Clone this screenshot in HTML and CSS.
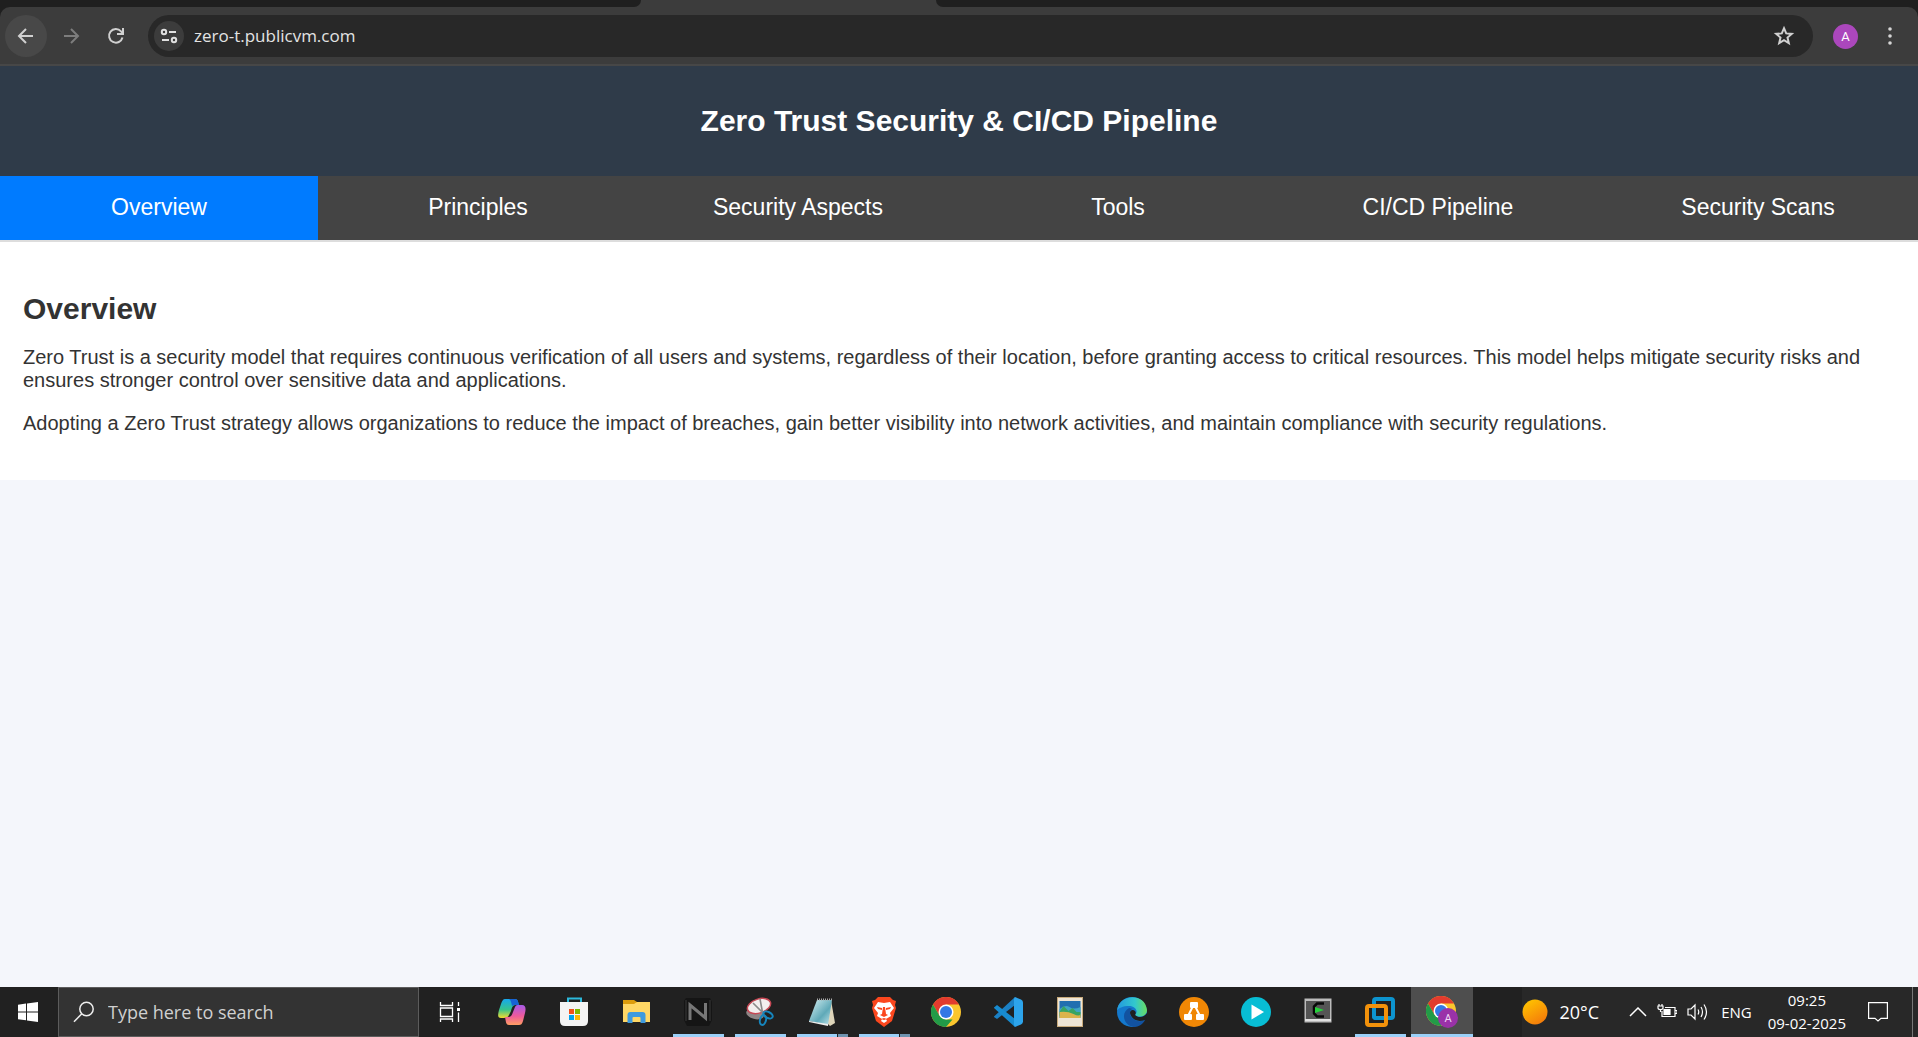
FILE: index.html
```html
<!DOCTYPE html>
<html lang="en">
<head>
<meta charset="utf-8">
<meta name="viewport" content="width=device-width, initial-scale=1">
<title>Zero Trust Security &amp; CI/CD Pipeline</title>
<link rel="stylesheet" href="styles.css">
</head>
<body>
<div class="browser">
  <div class="tabstrip"><span class="tabs-before"></span><span class="tab-active"></span><span class="tabs-after"></span></div>
  <div class="toolbar">
    <div class="nav-buttons">
      <button class="tool back" aria-label="Back"><svg width="20" height="20" viewBox="0 0 20 20" fill="none" stroke="#d0d0d0" stroke-width="2"><path d="M17 10H4M10 3 3 10l7 7"/></svg></button>
      <button class="tool" aria-label="Forward"><svg width="20" height="20" viewBox="0 0 20 20" fill="none" stroke="#7d7d7d" stroke-width="2"><path d="M3 10h13M10 3l7 7-7 7"/></svg></button>
      <button class="tool" aria-label="Reload"><svg width="20" height="20" viewBox="0 0 20 20" fill="none" stroke="#d0d0d0" stroke-width="2"><path d="M16.5 11.5A6.8 6.8 0 1 1 15 5.3l1.8 2M17 2v6h-6"/></svg></button>
    </div>
    <div class="omnibox">
      <button class="site-info" aria-label="Site information"><svg width="18" height="18" viewBox="0 0 18 18" fill="none" stroke="#e0e0e0" stroke-width="2"><circle cx="4" cy="5" r="2.2"/><path d="M9 5h7M2 13h7"/><circle cx="14" cy="13" r="2.2"/></svg></button>
      <input class="url" type="text" aria-label="Address" value="zero-t.publicvm.com">
      <button class="tool star" aria-label="Bookmark"><svg width="22" height="22" viewBox="0 0 22 22" fill="none" stroke="#d0d0d0" stroke-width="2"><path d="M11 3.2l2.2 5.2 5.6.5-4.3 3.7 1.3 5.5-4.8-2.9-4.8 2.9 1.3-5.5-4.3-3.7 5.6-.5z"/></svg></button>
    </div>
    <button class="avatar" aria-label="Profile">A</button>
    <button class="menu" aria-label="Menu"><svg width="6" height="20" viewBox="0 0 6 20" fill="#d6d6d6"><circle cx="3" cy="3" r="1.8"/><circle cx="3" cy="10" r="1.8"/><circle cx="3" cy="17" r="1.8"/></svg></button>
  </div>
</div>

<div class="page">
  <header class="banner"><h1>Zero Trust Security &amp; CI/CD Pipeline</h1></header>
  <nav class="tabs">
    <button class="tab current">Overview</button>
    <button class="tab">Principles</button>
    <button class="tab">Security Aspects</button>
    <button class="tab">Tools</button>
    <button class="tab">CI/CD Pipeline</button>
    <button class="tab">Security Scans</button>
  </nav>
  <main class="content">
    <h2>Overview</h2>
    <p>Zero Trust is a security model that requires continuous verification of all users and systems, regardless of their location, before granting access to critical resources. This model helps mitigate security risks and ensures stronger control over sensitive data and applications.</p>
    <p>Adopting a Zero Trust strategy allows organizations to reduce the impact of breaches, gain better visibility into network activities, and maintain compliance with security regulations.</p>
  </main>
</div>

<footer class="taskbar">
  <button class="start" aria-label="Start"><svg width="20" height="20" viewBox="0 0 20 20" fill="#fff"><path d="M0 2.8 8 1.6V9.4H0zM9 1.5 20 0v9.4H9zM0 10.4h8v7.9L0 17.2zM9 10.4h11V20L9 18.5z"/></svg></button>
  <label class="search">
    <svg width="22" height="22" viewBox="0 0 22 22" fill="none" stroke="#eee" stroke-width="1.5"><circle cx="13.5" cy="8" r="6.7"/><path d="M8.8 12.8 1 20.7"/></svg>
    <input type="text" aria-label="Search" placeholder="Type here to search">
  </label>
  <div class="apps">
    <button class="app" aria-label="Task View"><svg width="22" height="20" viewBox="0 0 22 20" fill="none" stroke="#fff" stroke-width="1.3"><path d="M1.5 0v3.5h12V0M1.5 6h12v8.5h-12zM1.5 20v-3h12v3M19.500 0v4M19.500 10.500V20"/><path d="M18 6h3v3h-3z" fill="#fff" stroke="none"/></svg></button>
    <button class="app" aria-label="Copilot"><svg width="30" height="30" viewBox="0 0 30 30"><defs><linearGradient id="cpa" x1="0" y1="0" x2="0" y2="1"><stop stop-color="#16a8ee"/><stop offset=".55" stop-color="#35c48d"/><stop offset="1" stop-color="#f3dc2f"/></linearGradient><linearGradient id="cpb" x1="0" y1="0" x2="0" y2="1"><stop stop-color="#a65ae8"/><stop offset=".55" stop-color="#ee5a9b"/><stop offset="1" stop-color="#ff9e62"/></linearGradient></defs><path d="M8 2h10c3 0 3 3 4 6h-3c-3 0-4 2-5 6l-2 4c-1 2-2 3-5 3H4c-4 0-3-4-2-8l2-6c1-3 2-5 4-5z" fill="url(#cpa)"/><path d="M12 2h6c3 0 3 3 4 6h-5l-2 1c-1-4-1-6-3-7z" fill="#1763d4"/><path d="M22 28H12c-3 0-3-3-4-8h3c3 0 4-2 5-5l2-5c1-2 2-2 4-2h3c4 0 4 4 3 8l-2 8c-1 3-2 4-4 4z" fill="url(#cpb)"/></svg></button>
    <button class="app" aria-label="Microsoft Store"><svg width="30" height="30" viewBox="0 0 30 30"><path d="M9 6V1.500h13V6" fill="none" stroke="#2cb9dc" stroke-width="2"/><path d="M1 5h28v19q0 5-5 5H6q-5 0-5-5z" fill="#f4f4f4"/><path d="M10 12h5v5h-5z" fill="#f1511b"/><path d="M16 12h5v5h-5z" fill="#80b900"/><path d="M10 18h5v5h-5z" fill="#00a4ef"/><path d="M16 18h5v5h-5z" fill="#fbb908"/></svg></button>
    <button class="app" aria-label="File Explorer"><svg width="30" height="30" viewBox="0 0 30 30"><path d="M2 3h11l3 2h12v7H2z" fill="#dc9c0c"/><path d="M2 7h11l3-2h13v20H2z" fill="#ffd765"/><path d="M6.500 26V18q0-3 3-3h12q3 0 3 3v8h-5v-5q0-1-1-1h-6q-1 0-1 1v5z" fill="#3e9ade"/></svg></button>
    <button class="app running" aria-label="Notes"><svg width="30" height="30" viewBox="0 0 30 30"><path d="M3 1h24l2 4v18l-3 6H4l-3-6V4z" fill="#151515"/><path d="M3 3v21M27 3v21" stroke="#3a3a3a"/><path d="M7 23V8l15.500 13V6" fill="none" stroke="#777" stroke-width="3"/></svg></button>
    <button class="app running" aria-label="Snipping Tool"><svg width="30" height="30" viewBox="0 0 30 30"><ellipse cx="10" cy="17" rx="9" ry="5" fill="#8e8586" transform="rotate(15 10 17)"/><ellipse cx="14" cy="9" rx="12" ry="7" fill="#f2eeee" stroke="#c74855" stroke-width="1.500" transform="rotate(-18 14 9)"/><path d="m8 6 11 11M15 2l3 16" stroke="#8a8a8a" stroke-width="1.600"/><g fill="none" stroke="#1685bd" stroke-width="2"><ellipse cx="23" cy="18" rx="5" ry="3" transform="rotate(25 23 18)"/><ellipse cx="18" cy="23" rx="3" ry="5" transform="rotate(15 18 23)"/></g></svg></button>
    <button class="app running grouped" aria-label="Notepad"><svg width="30" height="30" viewBox="0 0 30 30"><defs><linearGradient id="npd" x1="0" y1="0" x2="1" y2="1"><stop stop-color="#d9f2f4"/><stop offset=".6" stop-color="#5fa9b8"/><stop offset="1" stop-color="#c4e7ed"/></linearGradient></defs><path d="m24 3 4 23-5 3-4-4z" fill="#ded5ba"/><path d="M10 3h15l-4 25-19-4z" fill="url(#npd)"/><path d="m2 24 19 3v2L2 25z" fill="#eee"/><path d="M10 2.500h15" stroke="#aaa" stroke-width="2" stroke-dasharray="1 1"/></svg></button>
    <button class="app running grouped" aria-label="Brave"><svg width="30" height="30" viewBox="0 0 30 30"><path d="M9 0h12l3 3 3 1-1 4 1 3-4 13-8 6-8-6L3 11l1-3-1-4 3-1z" fill="#fb471e"/><path d="m9 5 6 1 6-1 4 6-4 5 1 3-5 3 1 2-3 2-3-2 1-2-5-3 1-3-4-5z" fill="#fff"/><path d="m8 10 5 1v2l-4-1zM22 10l-5 1v2l4-1zM14 10h2l1 7 2 1-4 2-4-2 2-1zM12 22l3-1 3 1-3 1z" fill="#fb471e"/></svg></button>
    <button class="app" aria-label="Chrome"><svg width="30" height="30" viewBox="0 0 30 30"><circle cx="15" cy="15" r="15" fill="#fbc62e"/><path d="M2 7.500A15 15 0 0 1 28 7.500H15L8.500 18.700z" fill="#e33b2e"/><path d="M2 7.500 8.500 18.700 15 22.500h6.500L15 30A15 15 0 0 1 2 7.500z" fill="#229b48"/><circle cx="15" cy="15" r="7.500" fill="#fff"/><circle cx="15" cy="15" r="6" fill="#3478e5"/></svg></button>
    <button class="app" aria-label="Visual Studio Code"><svg width="30" height="30" viewBox="0 0 30 30"><path d="M1 19.500 22 0v8L4 22l-3-2z" fill="#1b80c4"/><path d="M1 10.500 4 8l18 14v8L1 11z" fill="#178bd0"/><path d="m22 0 6 2.500q2 1 2 3v19q0 2-2 3L22 30l-1-2V2z" fill="#2da4eb"/></svg></button>
    <button class="app" aria-label="Photos"><svg width="30" height="30" viewBox="0 0 30 30"><path d="M2 0h26v30H2z" fill="#c9ab7c"/><path d="M3 1h24v28H3z" fill="#eee5d6"/><path d="M4.500 4h21v17h-21z" fill="#226fb0"/><path d="M4.500 12q6-5 10-2t11 0v10h-21z" fill="#3fa5c4"/><path d="m4.500 15 4-6 5 5 4-3 4 4h4v4h-21z" fill="#39a463"/><path d="M4.500 15q8-1 14 2t7 0v4h-21z" fill="#dcb34c"/></svg></button>
    <button class="app" aria-label="Edge"><svg width="30" height="30" viewBox="0 0 30 30"><defs><linearGradient id="edg" x1="0" x2="1"><stop stop-color="#2399df"/><stop offset=".6" stop-color="#32c8cd"/><stop offset="1" stop-color="#6add5f"/></linearGradient></defs><circle cx="15" cy="15" r="15" fill="#1478cc"/><path d="M0 14C1-3 28-5 30 13c0 7-9 8-12 5 4-4 0-9-6-9C6 9 1 11 0 14z" fill="url(#edg)"/><path d="M12 11c-9 5-5 18 5 19 5 0 9-3 11-7-7 3-15 0-15-8 0-1 1-3 3-3z" fill="#1252a0"/><path d="M18 18c3 3 9 3 12-2v6l-2 1c-6 2-13 1-15-7 0-3 3-4 5-2 1 1 1 3 0 4z" fill="#202020"/></svg></button>
    <button class="app" aria-label="draw.io"><svg width="30" height="30" viewBox="0 0 30 30"><circle cx="15" cy="15" r="15" fill="#f08705"/><path d="m14 9-5 10M16 9l5 10" stroke="#fff" stroke-width="2"/><g fill="#fff"><rect x="11" y="5" width="8" height="6" rx="1"/><rect x="5" y="17" width="8" height="6" rx="1"/><rect x="17" y="17" width="8" height="6" rx="1"/></g></svg></button>
    <button class="app" aria-label="Player"><svg width="30" height="30" viewBox="0 0 30 30"><circle cx="15" cy="15" r="15" fill="#08bdd4"/><path d="m10.500 7.500 12.500 7.500-12.500 7.500z" fill="#fff"/></svg></button>
    <button class="app" aria-label="Terminal"><svg width="30" height="30" viewBox="0 0 30 30"><path d="M1.500 1.500h27v24h-27z" fill="#bcbcbc"/><path d="M3 4h24v18H3z" fill="#555"/><path d="M21 6.500h-7l-3 3v7l3 3h7" fill="none" stroke="#080808" stroke-width="2.500"/><path d="m12 10 9 3-9 3z" fill="#25d33a"/><path d="M2 23h26" stroke="#e2e2e2" stroke-width="2"/></svg></button>
    <button class="app running" aria-label="VMware"><svg width="30" height="30" viewBox="0 0 30 30" fill="none" stroke-width="4"><rect x="9" y="2" width="19" height="19" rx="2" stroke="#0d94cf"/><rect x="2" y="9" width="19" height="19" rx="2" stroke="#f3920b"/><path d="M9 13v6q0 2 2 2h6" stroke="#0d94cf"/></svg></button>
    <button class="app running focused" aria-label="Chrome, profile A"><svg width="32" height="32" viewBox="0 0 32 32"><circle cx="15" cy="15" r="15" fill="#fbc62e"/><path d="M2 7.500A15 15 0 0 1 28 7.500H15L8.500 18.700z" fill="#e33b2e"/><path d="M2 7.500 8.500 18.700 15 22.500h6.500L15 30A15 15 0 0 1 2 7.500z" fill="#229b48"/><circle cx="15" cy="15" r="7.500" fill="#fff"/><circle cx="15" cy="15" r="6" fill="#3478e5"/><circle cx="22" cy="22" r="10" fill="#9a32a8"/><text x="22" y="26" text-anchor="middle" class="badge">A</text></svg></button>
  </div>
  <div class="tray">
    <button class="weather"><svg width="26" height="26" viewBox="0 0 26 26"><defs><linearGradient id="sun" x1=".2" y1="0" x2=".8" y2="1"><stop stop-color="#ffc400"/><stop offset="1" stop-color="#f4770b"/></linearGradient></defs><circle cx="13" cy="13" r="12.500" fill="url(#sun)"/></svg><span>20°C</span></button>
    <button class="status" aria-label="Hidden icons"><svg width="18" height="10" viewBox="0 0 18 10" fill="none" stroke="#fff" stroke-width="1.500"><path d="m1 9 8-8 8 8"/></svg></button>
    <button class="status" aria-label="Battery"><svg width="20" height="16" viewBox="0 0 20 16" fill="none" stroke="#fff" stroke-width="1.200"><path d="M8 3.500h10v9H5V7M18.500 6.500H20v3h-1.500M1 2h5v2q0 1.500-2.500 1.500T1 4zM2 0v2M5 0v2M3.500 6v2"/><path d="M7 5.500h6v5H7z" fill="#fff"/></svg></button>
    <button class="status" aria-label="Volume"><svg width="22" height="18" viewBox="0 0 22 18" fill="none" stroke="#fff" stroke-width="1.200"><path d="M1 6h3l4-4v14l-4-4H1zM11 6.500q1.500 2.500 0 5M14 4q3 5 0 10M17 1.500q5 7.500 0 15"/></svg></button>
    <span class="lang">ENG</span>
    <button class="clock"><time>09:25</time><time>09-02-2025</time></button>
    <button class="status" aria-label="Notifications"><svg width="20" height="20" viewBox="0 0 20 20" fill="none" stroke="#fff" stroke-width="1.200"><path d="M.600.600h18.800v15.800H13L10 19l-3-2.600H.600z"/></svg></button>
    <button class="show-desktop" aria-label="Show desktop"></button>
  </div>
</footer>
</body>
</html>
```
FILE: styles.css
```css
* { box-sizing: border-box; }

body {
  margin: 0;
  min-height: 100vh;
  display: flex;
  flex-direction: column;
  background: #f4f6fb;
  color: #333;
  font: 20px/23px "Liberation Sans", Arial, sans-serif;
}

button, input { font: inherit; color: inherit; }
button { padding: 0; border: 0; background: none; display: flex; align-items: center; justify-content: center; }
input { border: 0; padding: 0; background: none; outline: 0; min-width: 0; }
svg { display: block; flex: none; }

/* Browser frame */
.browser { background: #1f1f1f; font-family: "Open Sans", "Noto Sans", sans-serif; }
.tabstrip { display: flex; height: 7px; background: #3c3c3c; }
.tabs-before { flex: 641; background: #1f1f1f; border-bottom-right-radius: 10px; }
.tab-active { flex: 295; }
.tabs-after { flex: 982; background: #1f1f1f; border-bottom-left-radius: 10px; }
.toolbar {
  display: flex;
  align-items: center;
  padding: 8px 16px 7px 5px;
  background: #3c3c3c;
  border-bottom: 2px solid #474747;
  border-radius: 10px 10px 0 0;
}
.nav-buttons { display: flex; gap: 3px; margin-right: 11px; }
.tool { width: 42px; height: 42px; border-radius: 50%; }
.back { background: #484848; }
.omnibox {
  flex: 1;
  display: flex;
  align-items: center;
  height: 42px;
  padding: 0 8px 0 6px;
  border-radius: 21px;
  background: #282828;
}
.site-info { width: 30px; height: 30px; border-radius: 50%; background: #3c3c3c; }
.url { flex: 1; margin-left: 10px; color: #e3e3e3; font-size: 17px; line-height: 24px; }
.avatar {
  width: 25px;
  height: 25px;
  margin: 0 20px;
  border-radius: 50%;
  background: #ab47bc;
  color: #fff;
  font: 13px/25px Roboto, sans-serif;
}
.menu { width: 24px; height: 32px; }

/* Web page */
.page { flex: 1; }
.banner { padding: 38px 24px; background: #2f3b49; color: #fff; text-align: center; }
h1, h2 { margin: 0; font-size: 30px; line-height: 34px; }
.tabs {
  display: grid;
  grid-template-columns: 318fr repeat(5, 320fr);
  background: #444;
  border-bottom: 2px solid #ddd;
}
.tab { height: 64px; padding-bottom: 2px; color: #fff; font-size: 23px; line-height: 26px; }
.current { background: #007bff; }
.content { padding: 50px 23px 45px; background: #fff; }
.content p { margin: 20px 0 0; }

/* Taskbar */
.taskbar {
  display: flex;
  height: 50px;
  background: #212121;
  color: #fff;
  font-family: "Open Sans", "Noto Sans", sans-serif;
}
.start { width: 58px; padding-right: 2px; }
.search {
  display: flex;
  align-items: center;
  gap: 13px;
  width: 361px;
  padding: 0 14px;
  border: 1px solid #5c5c5c;
  background: #333;
}
.search input { flex: 1; font-size: 18px; line-height: 24px; }
.search input::placeholder { color: #d0d0d0; opacity: 1; }
.apps { display: flex; }
.app { width: 62px; position: relative; }
.running::after {
  content: "";
  position: absolute;
  left: 6px;
  right: 5px;
  bottom: 0;
  height: 3px;
  background: #9bd0f8;
}
.grouped::after { background: linear-gradient(to right, #9bd0f8 40px, #212121 40px, #212121 41px, #6f94b0 41px); }
.focused { background: #4e4e4e; }
.focused::after { left: 0; right: 0; }
.badge { fill: #f0d8f4; font: 11px Roboto, sans-serif; }
.tray { display: flex; align-items: center; margin-left: auto; background: #282828; }
.weather { gap: 12px; margin-right: 30px; font-size: 18px; }
.status { height: 50px; margin-right: 10px; }
.lang { margin: 0 16px 0 2px; font-size: 15px; }
.clock { flex-direction: column; margin-right: 22px; font-size: 15px; line-height: 23px; }
.show-desktop { align-self: stretch; width: 6px; margin-left: 14px; border-left: 1px solid #777; }
```
